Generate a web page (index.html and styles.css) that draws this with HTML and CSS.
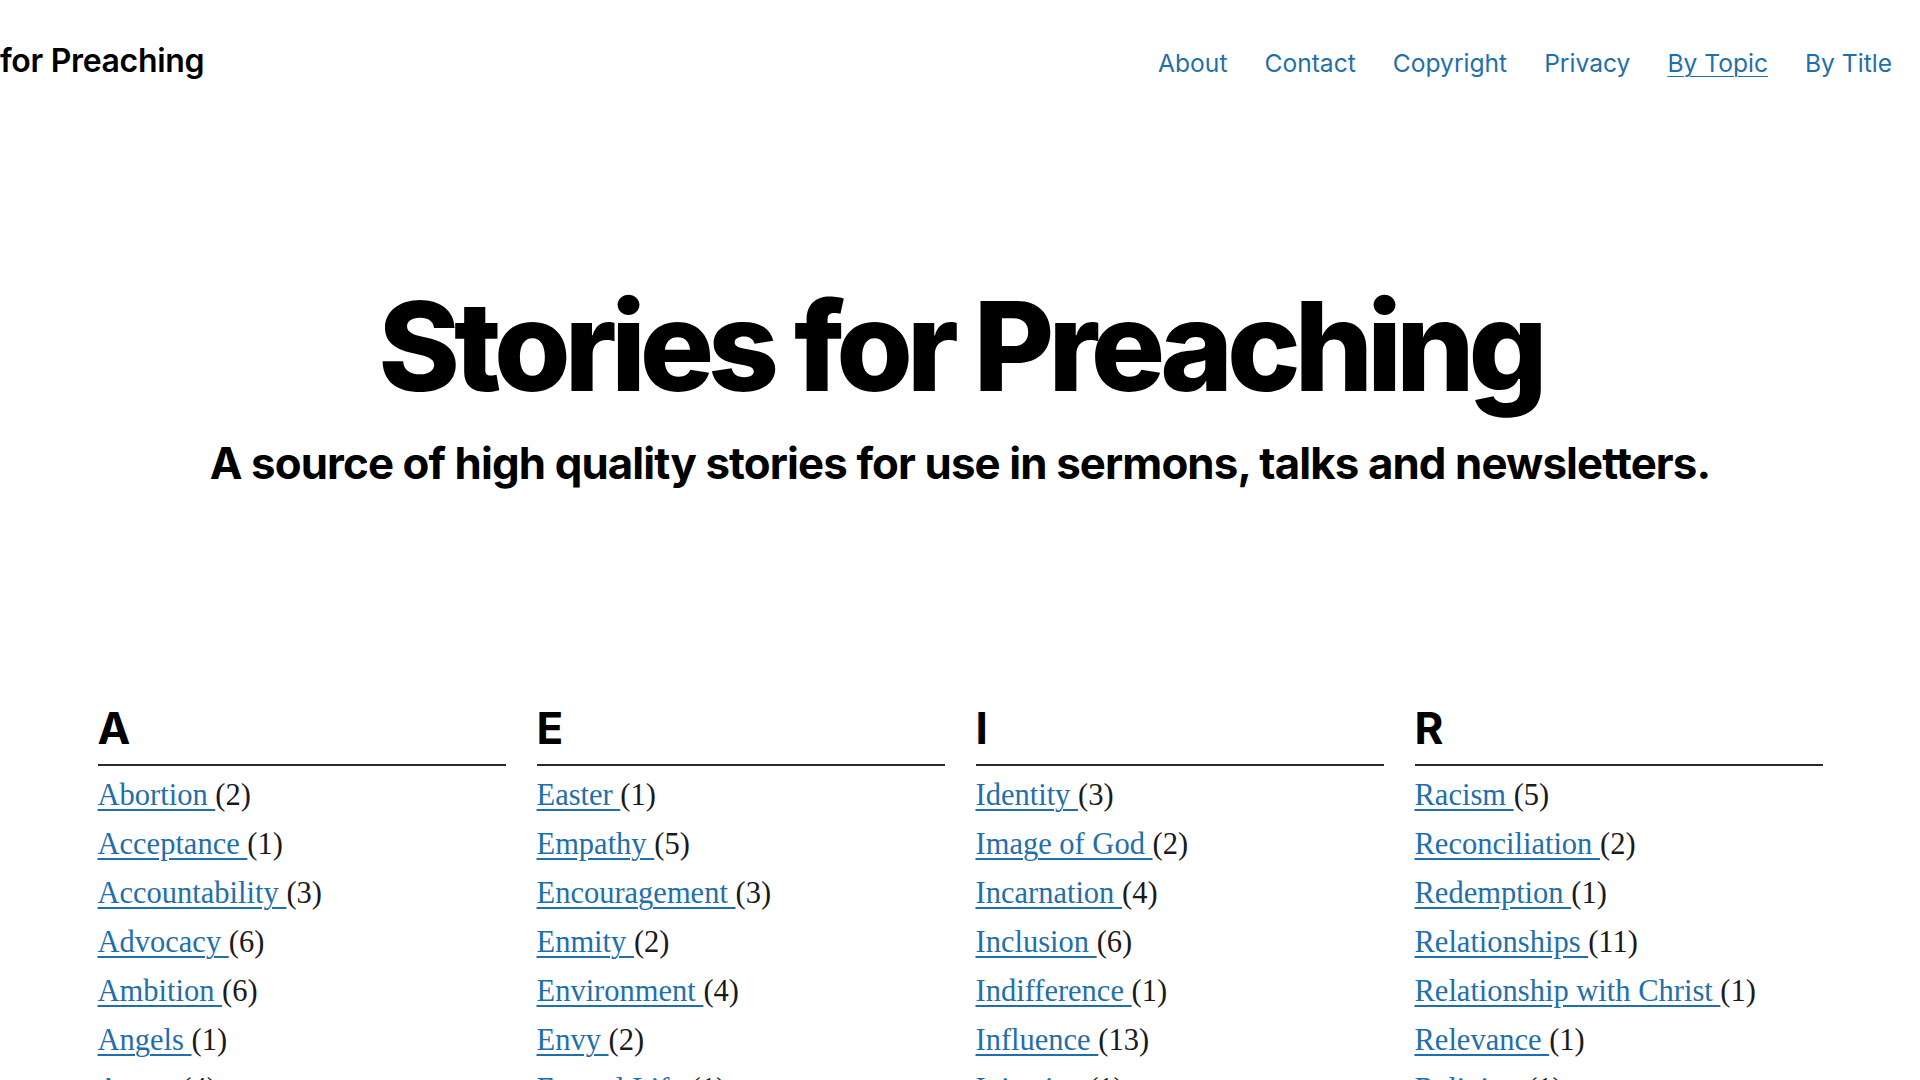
FILE: index.html
```html
<!DOCTYPE html>
<html lang="en">
<head>
<meta charset="utf-8">
<title>Stories for Preaching – By Topic</title>
<link rel="stylesheet" href="styles.css">
</head>
<body>
<header class="site-header">
  <p class="site-title"><a href="#">for Preaching</a></p>
  <nav class="site-nav">
    <a href="#">About</a>
    <a href="#">Contact</a>
    <a href="#">Copyright</a>
    <a href="#">Privacy</a>
    <a href="#" class="current">By Topic</a>
    <a href="#">By Title</a>
  </nav>
</header>

<section class="hero">
  <h1 class="hero-title">Stories for Preaching</h1>
  <p class="hero-tagline">A source of high quality stories for use in sermons, talks and newsletters.</p>
</section>

<main class="topics">
  <div class="topic-col">
    <h2 class="topic-letter">A</h2>
    <ul class="topic-list">
      <li><a href="#">Abortion </a>(2)</li>
      <li><a href="#">Acceptance </a>(1)</li>
      <li><a href="#">Accountability </a>(3)</li>
      <li><a href="#">Advocacy </a>(6)</li>
      <li><a href="#">Ambition </a>(6)</li>
      <li><a href="#">Angels </a>(1)</li>
      <li><a href="#">Anger </a>(4)</li>
    </ul>
  </div>
  <div class="topic-col">
    <h2 class="topic-letter">E</h2>
    <ul class="topic-list">
      <li><a href="#">Easter </a>(1)</li>
      <li><a href="#">Empathy </a>(5)</li>
      <li><a href="#">Encouragement </a>(3)</li>
      <li><a href="#">Enmity </a>(2)</li>
      <li><a href="#">Environment </a>(4)</li>
      <li><a href="#">Envy </a>(2)</li>
      <li><a href="#">Eternal Life </a>(1)</li>
    </ul>
  </div>
  <div class="topic-col">
    <h2 class="topic-letter">I</h2>
    <ul class="topic-list">
      <li><a href="#">Identity </a>(3)</li>
      <li><a href="#">Image of God </a>(2)</li>
      <li><a href="#">Incarnation </a>(4)</li>
      <li><a href="#">Inclusion </a>(6)</li>
      <li><a href="#">Indifference </a>(1)</li>
      <li><a href="#">Influence </a>(13)</li>
      <li><a href="#">Injustice </a>(1)</li>
    </ul>
  </div>
  <div class="topic-col">
    <h2 class="topic-letter">R</h2>
    <ul class="topic-list">
      <li><a href="#">Racism </a>(5)</li>
      <li><a href="#">Reconciliation </a>(2)</li>
      <li><a href="#">Redemption </a>(1)</li>
      <li><a href="#">Relationships </a>(11)</li>
      <li><a href="#">Relationship with Christ </a>(1)</li>
      <li><a href="#">Relevance </a>(1)</li>
      <li><a href="#">Religion </a>(1)</li>
    </ul>
  </div>
</main>
</body>
</html>
```

FILE: styles.css
```css
html, body {
  margin: 0;
  padding: 0;
  background: #ffffff;
}

body {
  font-family: Inter, "Noto Sans", "Liberation Sans", sans-serif;
  color: #000000;
}

a {
  color: #1f6fae;
}

.site-header {
  display: flex;
  justify-content: space-between;
  align-items: baseline;
  padding: 41px 28px 0 0;
}

.site-title {
  margin: 0;
  font-size: 32px;
  font-weight: 600;
  letter-spacing: -0.01em;
  line-height: normal;
}

.site-title a {
  color: #000000;
  text-decoration: none;
}

.site-nav {
  display: flex;
  gap: 37px;
  font-size: 24.6px;
  line-height: normal;
}

.site-nav a {
  text-decoration: none;
}

.site-nav a.current {
  text-decoration: underline;
  text-underline-offset: 4px;
  text-decoration-thickness: 1px;
}

.hero {
  text-align: center;
  padding-top: 204px;
}

.hero-title {
  margin: 0;
  font-size: 124px;
  font-weight: 800;
  line-height: 1;
  letter-spacing: -0.05em;
}

.hero-tagline {
  margin: 30px 0 0;
  font-size: 43.8px;
  font-weight: 700;
  line-height: 1.2;
  letter-spacing: -0.02em;
}

.topics {
  width: 1725px;
  margin: 211px auto 0;
  display: grid;
  grid-template-columns: repeat(4, 1fr);
  column-gap: 31px;
}

.topic-letter {
  margin: 0;
  padding-bottom: 10px;
  font-size: 44px;
  font-weight: 700;
  line-height: 1.2;
  border-bottom: 2px solid #2a2a2a;
}

.topic-list {
  list-style: none;
  margin: 0;
  padding: 5px 0 0;
  font-family: "Liberation Serif", "Times New Roman", serif;
  font-size: 30.5px;
  line-height: 49px;
  color: #1a1a1a;
}

.topic-list a {
  text-decoration: underline;
  text-decoration-thickness: 2px;
  text-underline-offset: 4px;
}
```
